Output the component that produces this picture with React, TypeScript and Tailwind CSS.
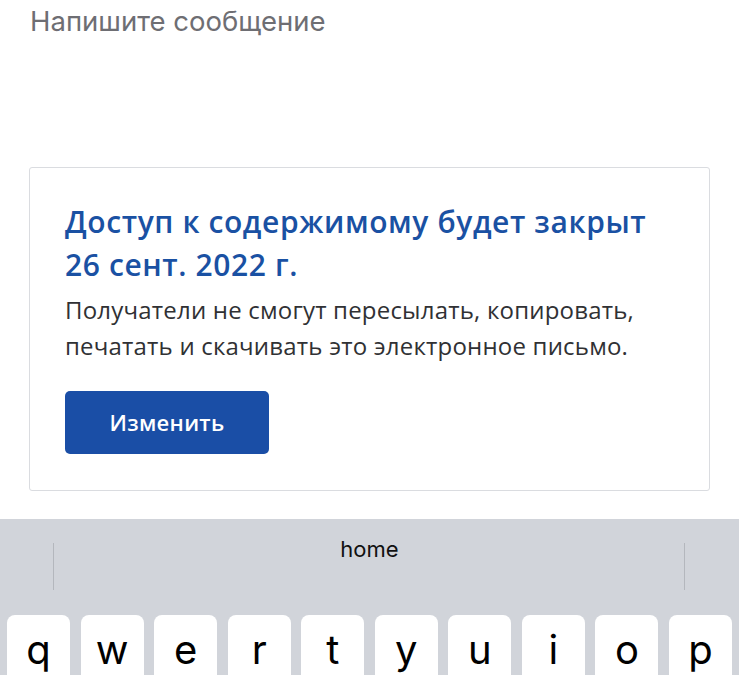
const keys = ['q', 'w', 'e', 'r', 't', 'y', 'u', 'i', 'o', 'p']

const sf = { fontFamily: 'Inter, "Liberation Sans", Arial, sans-serif' }
const gsans = { fontFamily: '"Open Sans", Roboto, "Noto Sans", sans-serif' }

export default function App() {
  return (
    <div className="w-[739px] h-[675px] overflow-hidden bg-white flex flex-col">
      {/* Compose field */}
      <div className="h-[167px] shrink-0 px-[30px] pt-[6px]" style={sf}>
        <span className="text-[27.5px] leading-[30px] text-[#6e6e73]">Напишите сообщение</span>
      </div>

      {/* Access card */}
      <div className="mx-[29px] h-[324px] shrink-0 border border-[#dadce0] rounded-[3px] pl-[35px] pr-[10px] pt-[32px]" style={gsans}>
        <div className="text-[30px] leading-[43px] font-semibold text-[#1a51a3] tracking-[0.6px]">
          Доступ к содержимому будет закрыт
          <br />
          26 сент. 2022 г.
        </div>
        <p className="mt-[6px] text-[24px] leading-[36px] text-[#303134] tracking-[0.2px]">
          Получатели не смогут пересылать, копировать,
          <br />
          печатать и скачивать это электронное письмо.
        </p>
        <button className="mt-[27px] w-[204px] h-[63px] rounded-[5px] bg-[#1a4ea6] text-white text-[22px] font-semibold tracking-[0.3px]">
          Изменить
        </button>
      </div>

      <div className="h-[28px] shrink-0" />

      {/* Keyboard */}
      <div className="flex-1 bg-[#d1d4da] flex flex-col" style={sf}>
        <div className="h-[96px] shrink-0 flex items-start pt-[19px] relative">
          <div className="absolute left-[53px] top-[24px] w-px h-[47px] bg-[#b4b7bd]" />
          <div className="flex-1 text-center text-[22px] leading-[22px] text-[#111]">home</div>
          <div className="absolute left-[684px] top-[24px] w-px h-[47px] bg-[#b4b7bd]" />
        </div>
        <div className="flex gap-[10.5px] px-[7px]">
          {keys.map(k => (
            <div key={k} className="flex-1 h-[76px] bg-white rounded-[8px] flex justify-center pt-[15px] text-[40px] leading-[40px] text-black">
              {k}
            </div>
          ))}
        </div>
      </div>
    </div>
  )
}
